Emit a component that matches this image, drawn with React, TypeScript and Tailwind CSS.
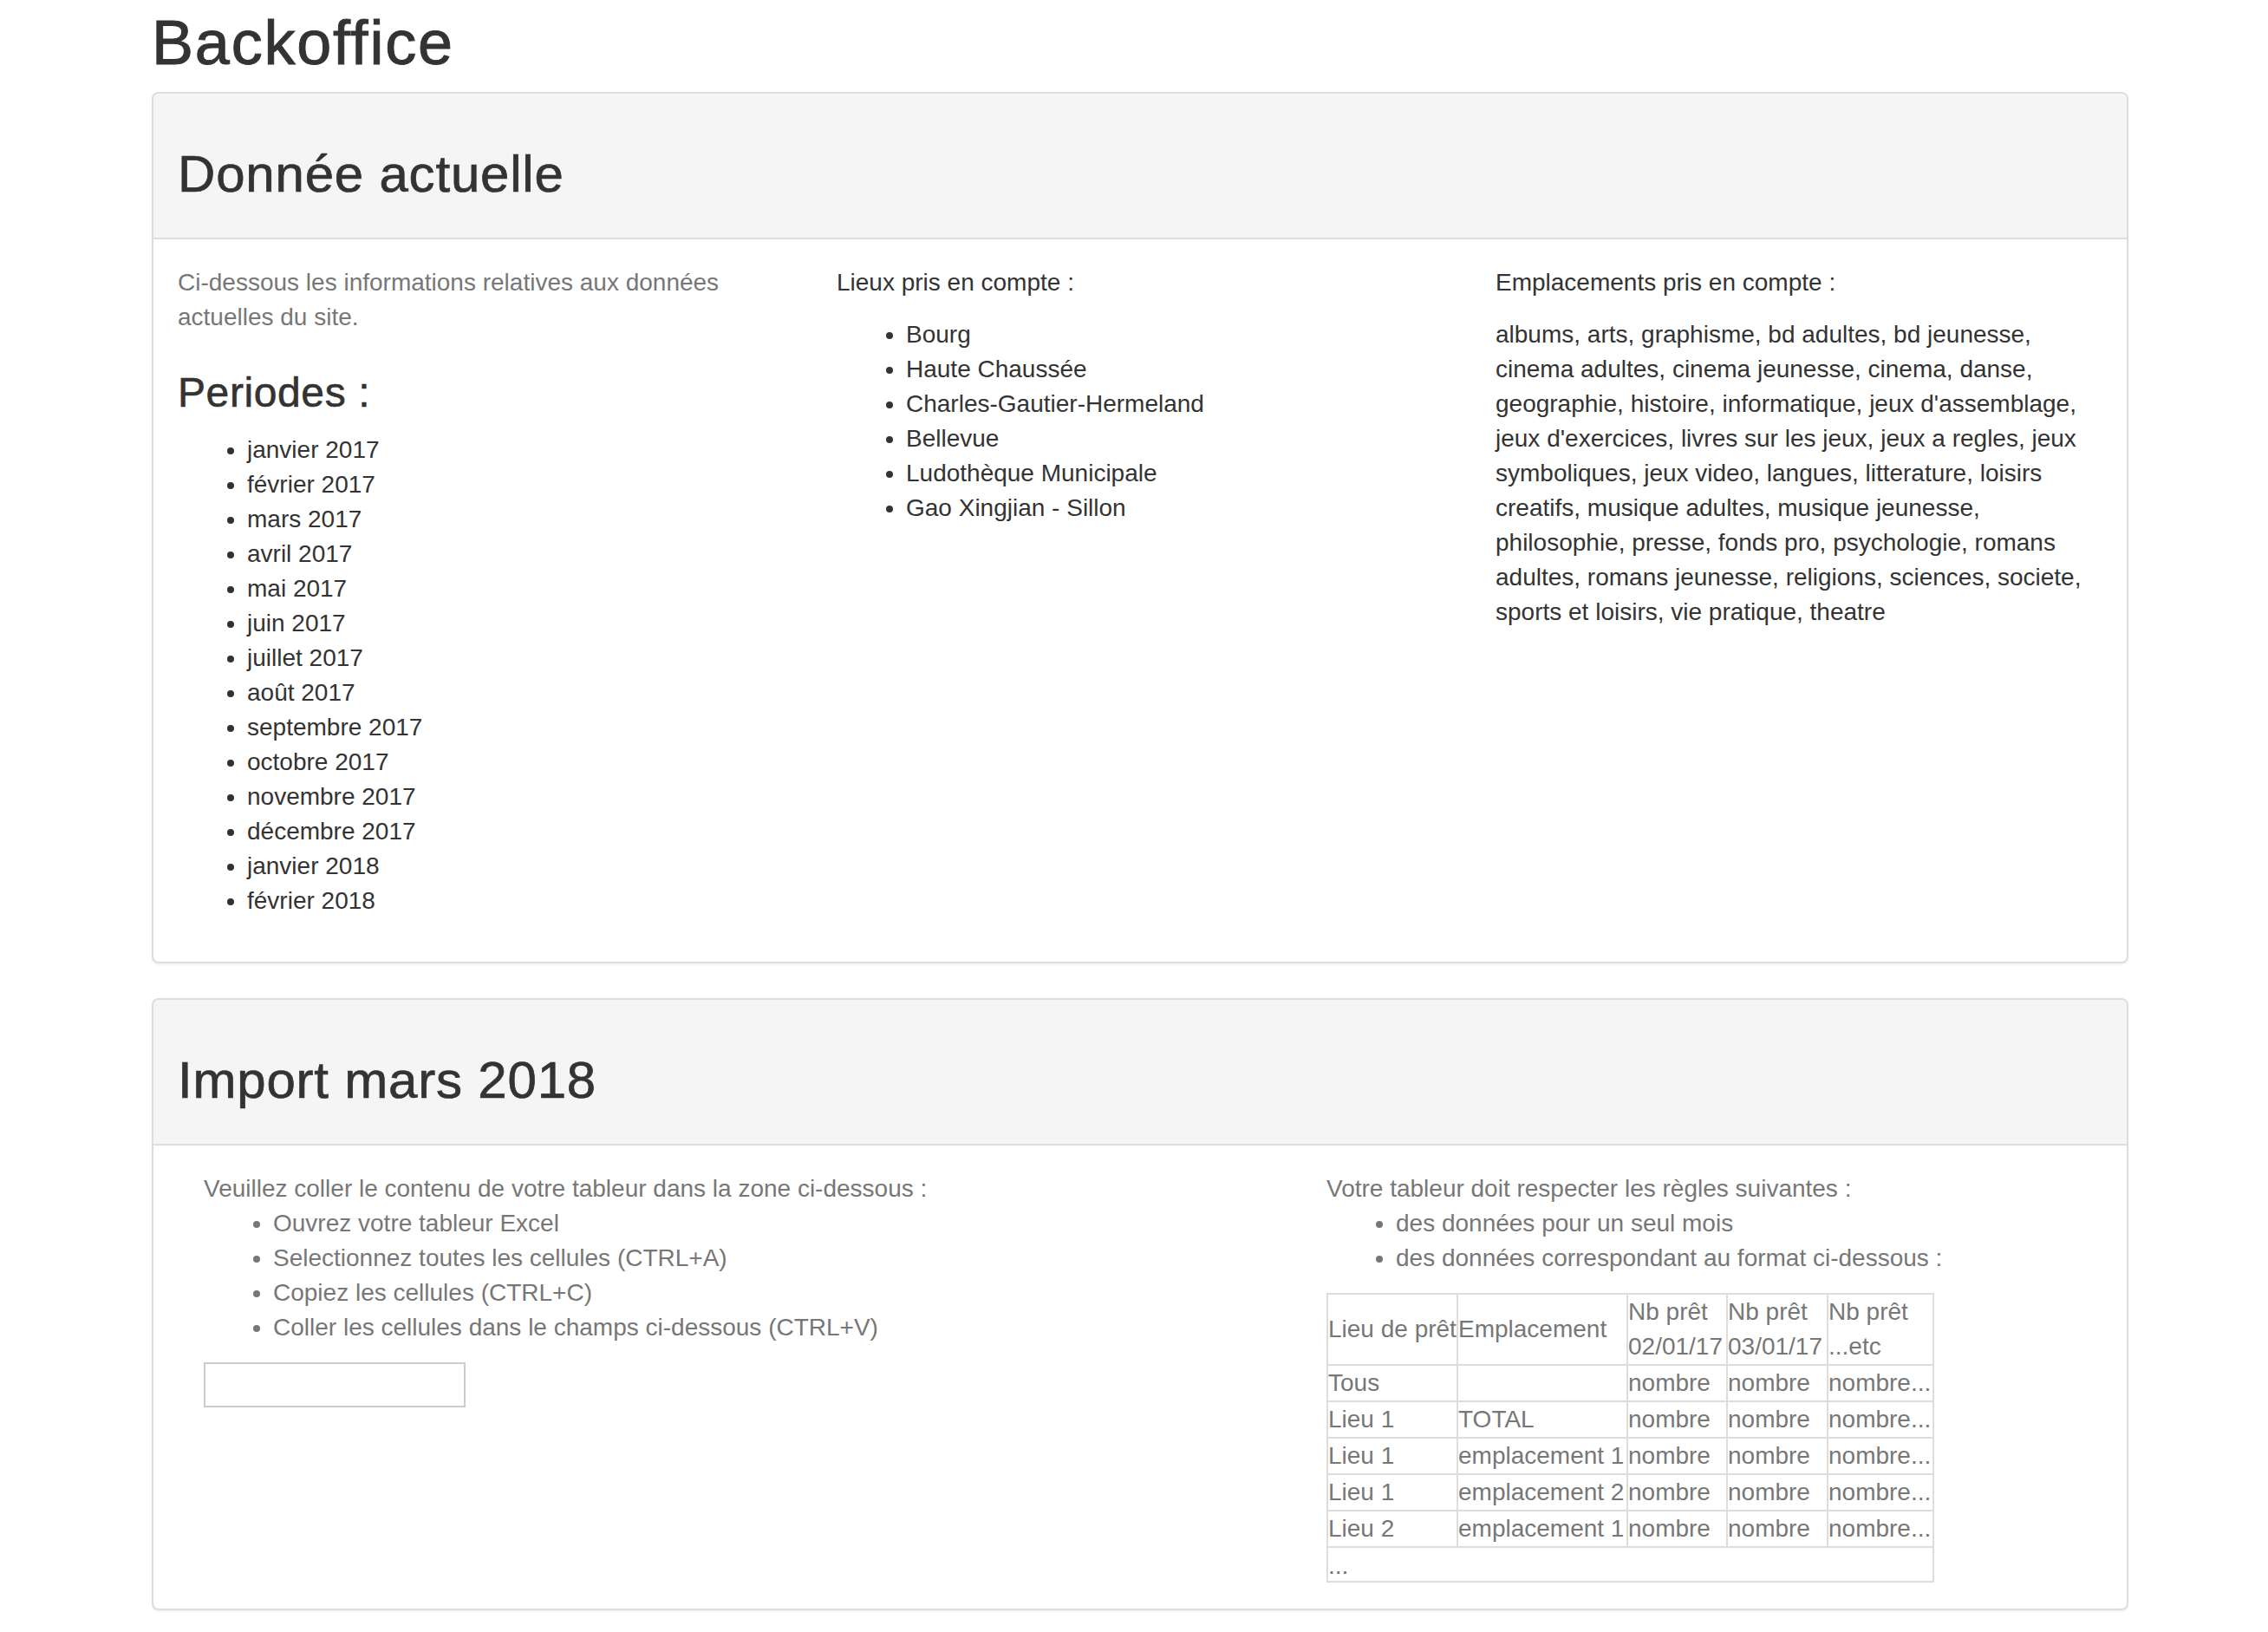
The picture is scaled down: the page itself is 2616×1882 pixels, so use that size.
const periodes = [
  'janvier 2017',
  'février 2017',
  'mars 2017',
  'avril 2017',
  'mai 2017',
  'juin 2017',
  'juillet 2017',
  'août 2017',
  'septembre 2017',
  'octobre 2017',
  'novembre 2017',
  'décembre 2017',
  'janvier 2018',
  'février 2018',
]

const lieux = [
  'Bourg',
  'Haute Chaussée',
  'Charles-Gautier-Hermeland',
  'Bellevue',
  'Ludothèque Municipale',
  'Gao Xingjian - Sillon',
]

// keep the same line breaks as the live page
const emplacements = [
  'albums, arts, graphisme, bd adultes, bd jeunesse,',
  'cinema adultes, cinema jeunesse, cinema, danse,',
  "geographie, histoire, informatique, jeux d'assemblage,",
  "jeux d'exercices, livres sur les jeux, jeux a regles, jeux",
  'symboliques, jeux video, langues, litterature, loisirs',
  'creatifs, musique adultes, musique jeunesse,',
  'philosophie, presse, fonds pro, psychologie, romans',
  'adultes, romans jeunesse, religions, sciences, societe,',
  'sports et loisirs, vie pratique, theatre',
]

const exampleRows = [
  ['Tous', '', 'nombre', 'nombre', 'nombre...'],
  ['Lieu 1', 'TOTAL', 'nombre', 'nombre', 'nombre...'],
  ['Lieu 1', 'emplacement 1', 'nombre', 'nombre', 'nombre...'],
  ['Lieu 1', 'emplacement 2', 'nombre', 'nombre', 'nombre...'],
  ['Lieu 2', 'emplacement 1', 'nombre', 'nombre', 'nombre...'],
]

const cell = 'border-2 border-[#ddd] p-0 whitespace-nowrap'

function Panel({ title, children }: { title: string; children: React.ReactNode }) {
  return (
    <div className="mb-[40px] rounded-[8px] border-2 border-[#ddd] bg-white shadow-[0_2px_2px_rgba(0,0,0,0.05)]">
      <div className="rounded-t-[6px] border-b-2 border-[#ddd] bg-[#f5f5f5] px-[28px] pt-[60px] pb-[40px]">
        <h2 className="text-[60px] leading-[66px] font-medium tracking-[0.8px] text-[#333] [-webkit-text-stroke:0.7px_#333]">
          {title}
        </h2>
      </div>
      {children}
    </div>
  )
}

export default function App() {
  return (
    <div
      className="min-h-screen bg-white text-[28px] leading-[40px] text-[#333]"
      style={{ fontFamily: '"Liberation Sans", Arial, sans-serif' }}
    >
      <div className="ml-[145px] w-[2340px] px-[30px]">
        <h1 className="mt-[10px] mb-[17px] text-[72px] leading-[79px] font-medium tracking-[1.8px] text-[#333] [-webkit-text-stroke:1px_#333]">
          Backoffice
        </h1>

        <Panel title="Donnée actuelle">
          <div className="grid grid-cols-3 gap-x-[60px] px-[28px] py-[30px]">
            <div>
              <p className="mb-[20px] text-[#777]">
                Ci-dessous les informations relatives aux données actuelles du site.
              </p>
              <h3 className="mt-[40px] mb-[20px] text-[48px] leading-[53px] font-medium tracking-[0.6px] [-webkit-text-stroke:0.6px_#333]">
                Periodes :
              </h3>
              <ul className="mb-[20px] list-disc pl-[80px]">
                {periodes.map((p) => (
                  <li key={p}>{p}</li>
                ))}
              </ul>
            </div>
            <div>
              <p className="mb-[20px]">Lieux pris en compte :</p>
              <ul className="list-disc pl-[80px]">
                {lieux.map((l) => (
                  <li key={l}>{l}</li>
                ))}
              </ul>
            </div>
            <div>
              <p className="mb-[20px]">Emplacements pris en compte :</p>
              <p className="whitespace-nowrap">
                {emplacements.map((line, i) => (
                  <span key={i}>
                    {line}
                    <br />
                  </span>
                ))}
              </p>
            </div>
          </div>
        </Panel>

        <Panel title="Import mars 2018">
          <div className="grid grid-cols-12 px-[28px] py-[30px] text-[#777]">
            <div className="col-span-7 px-[30px]">
              <div>Veuillez coller le contenu de votre tableur dans la zone ci-dessous :</div>
              <ul className="mb-[20px] list-disc pl-[80px]">
                <li>Ouvrez votre tableur Excel</li>
                <li>Selectionnez toutes les cellules (CTRL+A)</li>
                <li>Copiez les cellules (CTRL+C)</li>
                <li>Coller les cellules dans le champs ci-dessous (CTRL+V)</li>
              </ul>
              <textarea className="block h-[52px] w-[302px] resize-none border-2 border-[#ccc] bg-white" />
            </div>
            <div className="col-span-5 px-[30px]">
              <div>Votre tableur doit respecter les règles suivantes :</div>
              <ul className="mb-[20px] list-disc pl-[80px]">
                <li>des données pour un seul mois</li>
                <li>des données correspondant au format ci-dessous :</li>
              </ul>
              <table className="border-collapse border-2 border-[#ddd]">
                <tbody>
                  <tr>
                    <td className={`${cell} min-w-[150px]`}>Lieu de prêt</td>
                    <td className={`${cell} min-w-[196px]`}>Emplacement</td>
                    <td className={`${cell} min-w-[115px]`}>Nb prêt<br />02/01/17</td>
                    <td className={`${cell} min-w-[116px]`}>Nb prêt<br />03/01/17</td>
                    <td className={`${cell} min-w-[122px]`}>Nb prêt<br />...etc</td>
                  </tr>
                  {exampleRows.map((row, i) => (
                    <tr key={i}>
                      {row.map((text, j) => (
                        <td key={j} className={`${cell} h-[40px]`}>
                          {text}
                        </td>
                      ))}
                    </tr>
                  ))}
                  <tr>
                    <td colSpan={5} className="h-[40px] border-2 border-[#ddd] p-0 align-bottom leading-[34px]">
                      ...
                    </td>
                  </tr>
                </tbody>
              </table>
            </div>
          </div>
        </Panel>
      </div>
    </div>
  )
}
